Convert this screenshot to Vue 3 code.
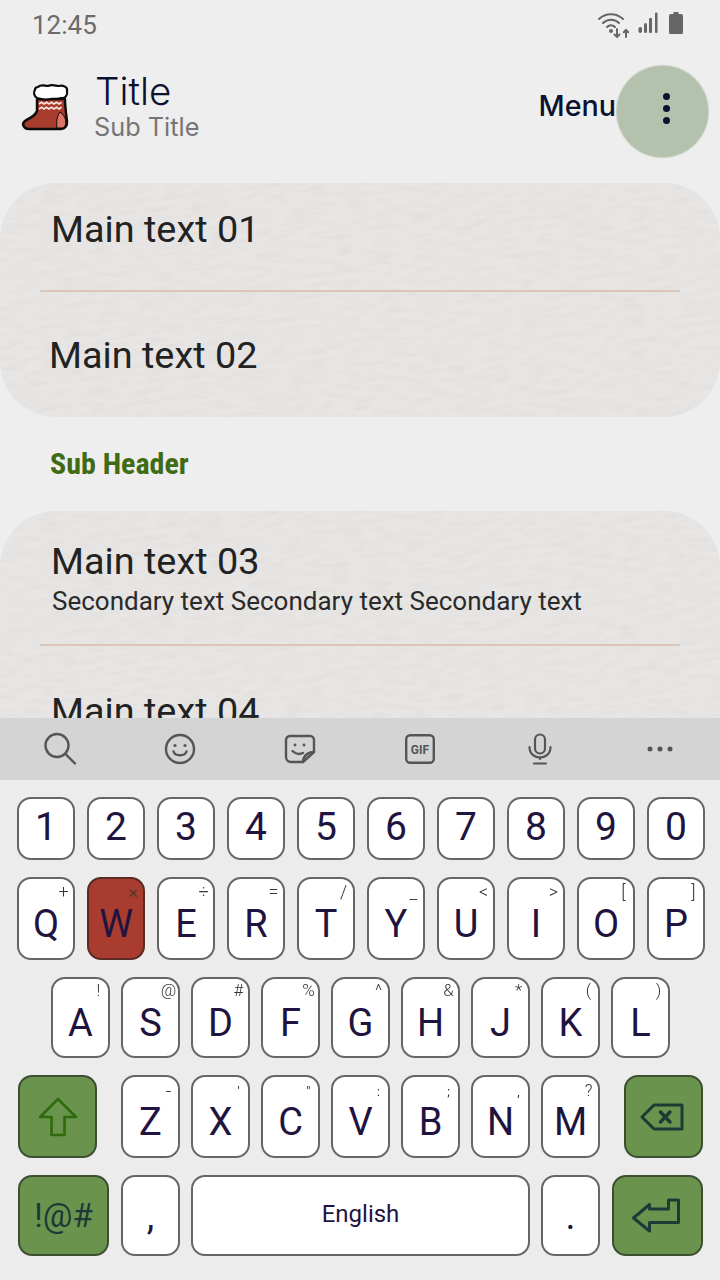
<template>
  <div class="screen">
    <!-- status bar -->
    <div class="status-bar">
      <span class="clock">12:45</span>
      <div class="status-icons">
        <svg class="wifi" width="31" height="26" viewBox="0 0 31 26" fill="none" stroke="#666" stroke-linecap="round">
          <path d="M1 7C7.500 0.500 18.500 0.500 25 7" stroke-width="2" />
          <path d="M5 11C9.500 6.500 16.500 6.500 21 11" stroke-width="2" />
          <path d="M9 15C11.500 12.500 14.500 12.500 17 15" stroke-width="2" />
          <circle cx="13" cy="19" r="2" fill="#666" stroke="none" />
          <path d="M19 17v8M16.500 22.500l2.500 2.500 2.500-2.500" stroke-width="2" />
          <path d="M28 25v-7M25.800 20.200l2.200-2.200 2.200 2.200" stroke-width="2" />
        </svg>
        <svg width="20" height="22" viewBox="0 0 20 22" fill="#666">
          <rect x="0.500" y="15" width="3.500" height="6" rx="1.700" />
          <rect x="6" y="11" width="3" height="10" rx="1.500" />
          <rect x="11" y="6" width="3" height="15" rx="1" />
          <rect x="17" y="0.500" width="2.500" height="20.500" rx="1" />
        </svg>
        <svg width="14" height="22" viewBox="0 0 14 22" fill="#666">
          <path d="M4.500 0h5v2H12a2 2 0 0 1 2 2V20.500a1.500 1.500 0 0 1-1.500 1.500h-11A1.500 1.500 0 0 1 0 20.500V4a2 2 0 0 1 2-2h2.500z" />
        </svg>
      </div>
    </div>

    <!-- app bar -->
    <header class="app-bar">
      <svg class="logo" width="70" height="65" viewBox="0 0 70 65">
        <path d="M27 24H55C55 31 56 38 57 46C57.500 51 55 54 51 54H19C14 54 11 49 15 46C19 43 25 42 27 36Z" fill="#a83c2e" stroke="#0b0b0b" stroke-width="2.400" stroke-linejoin="round" />
        <path d="M50 37C47 41 46 47 47 53H51C55 53 56 49.500 55.700 46C55.300 42 53 39 50 37Z" fill="#dc7566" stroke="#0b0b0b" stroke-width="1" />
        <path d="M29 29l2.500-1.700 2.500 1.700 2.500-1.700 2.500 1.700 2.500-1.700 2.500 1.700 2.500-1.700 2.500 1.700 2.500-1.700" fill="none" stroke="#f6e3df" stroke-width="1.700" />
        <path d="M29 34l2.500-1.700 2.500 1.700 2.500-1.700 2.500 1.700 2.500-1.700 2.500 1.700 2.500-1.700 2.500 1.700 2.500-1.700" fill="none" stroke="#f6e3df" stroke-width="1.700" />
        <path d="M28 12C31 9 35 11 38 11C42 9 46 11 49 11C53 10 58 12 57 16C58 20 55 24 51 23C47 25 43 23 40 24C36 25 30 24 27 23C24 21 23 17 25 15C25 13 26 12 28 12Z" fill="#fff" stroke="#0b0b0b" stroke-width="2.200" stroke-linejoin="round" />
      </svg>
      <div class="titles">
        <div class="title">Title</div>
        <div class="sub-title">Sub Title</div>
      </div>
      <div class="menu-label">Menu</div>
      <button class="more-btn">
        <span class="dot"></span><span class="dot"></span><span class="dot"></span>
      </button>
    </header>

    <!-- list -->
    <main class="list-area">
      <section class="card">
        <svg class="paper" width="100%" height="100%"><rect x="-60" y="-120" width="840" height="480" transform="rotate(-7 360 120)" filter="url(#paperGrain)" /></svg>
        <div class="row row-one"><span class="main-text">Main text 01</span></div>
        <div class="divider"></div>
        <div class="row row-two"><span class="main-text shift">Main text 02</span></div>
      </section>

      <h3 class="sub-header">Sub Header</h3>

      <section class="card card-long">
        <svg class="paper" width="100%" height="100%"><rect x="-60" y="-120" width="840" height="540" transform="rotate(-7 360 150)" filter="url(#paperGrain)" /></svg>
        <div class="row row-three">
          <span class="main-text">Main text 03</span>
          <span class="secondary">Secondary text Secondary text Secondary text</span>
        </div>
        <div class="divider"></div>
        <div class="row row-four"><span class="main-text">Main text 04</span></div>
      </section>

      <svg class="filter-defs" width="0" height="0">
        <filter id="paperGrain" x="0" y="0" width="100%" height="100%">
          <feTurbulence type="fractalNoise" baseFrequency="0.05 0.2" numOctaves="5" seed="7" />
          <feColorMatrix type="matrix" values="0 0 0 0 0.6  0 0 0 0 0.59  0 0 0 0 0.58  0.3 0.3 0 0 -0.24" />
        </filter>
      </svg>
    </main>

    <!-- keyboard toolbar -->
    <div class="kb-toolbar">
      <div class="tool">
        <svg width="36" height="36" viewBox="0 0 36 36" fill="none" stroke="#555" stroke-width="2.400" stroke-linecap="round">
          <circle cx="15" cy="14.500" r="11.500" />
          <path d="M23.500 23L33 32.500" />
        </svg>
      </div>
      <div class="tool">
        <svg width="32" height="32" viewBox="0 0 32 32" fill="none" stroke="#555" stroke-width="2.400" stroke-linecap="round">
          <circle cx="16" cy="16" r="14" />
          <circle cx="11" cy="12.500" r="1.600" fill="#555" stroke="none" />
          <circle cx="21" cy="12.500" r="1.600" fill="#555" stroke="none" />
          <path d="M9.500 18.500C11 23.500 21 23.500 22.500 18.500" />
        </svg>
      </div>
      <div class="tool">
        <svg width="32" height="30" viewBox="0 0 32 30" fill="none" stroke="#555" stroke-width="2.400" stroke-linejoin="round" stroke-linecap="round">
          <path d="M19 28H7a5 5 0 0 1-5-5V6a4 4 0 0 1 4-4h20a4 4 0 0 1 4 4v12z" />
          <path d="M19 28c0-6 5-10 11-10" />
          <circle cx="11" cy="11" r="1.400" fill="#555" stroke="none" />
          <circle cx="20" cy="11" r="1.400" fill="#555" stroke="none" />
          <path d="M8.500 17c3 3 7 3.500 10.500 2" />
        </svg>
      </div>
      <div class="tool">
        <svg width="30" height="30" viewBox="0 0 30 30">
          <rect x="1.200" y="1.200" width="27.600" height="27.600" rx="4" fill="none" stroke="#555" stroke-width="2.400" />
          <text x="15" y="19.500" text-anchor="middle" class="gif-text">GIF</text>
        </svg>
      </div>
      <div class="tool">
        <svg width="26" height="32" viewBox="0 0 26 32" fill="none" stroke="#555" stroke-width="2.200" stroke-linecap="round">
          <rect x="8" y="1.500" width="10" height="19" rx="5" />
          <path d="M2.500 14c0 14 21 14 21 0" />
          <path d="M13 24.500V26M7 30.500h12" />
        </svg>
      </div>
      <div class="tool">
        <svg width="26" height="6" viewBox="0 0 26 6" fill="#555">
          <circle cx="3" cy="3" r="2.500" />
          <circle cx="13" cy="3" r="2.500" />
          <circle cx="23" cy="3" r="2.500" />
        </svg>
      </div>
    </div>

    <!-- keyboard -->
    <div class="keyboard">
      <div class="kb-row num-row">
        <div v-for="n in numbers" :key="n" class="key num-key">{{ n }}</div>
      </div>
      <div class="kb-row top-row">
        <div v-for="k in topRow" :key="k.l" class="key top-key" :class="{ pressed: k.l === 'W' }">
          <span class="hint" :class="k.c">{{ k.h }}</span>{{ k.l }}
        </div>
      </div>
      <div class="kb-row mid-row">
        <div v-for="k in midRow" :key="k.l" class="key letter-key">
          <span class="hint" :class="k.c">{{ k.h }}</span>{{ k.l }}
        </div>
      </div>
      <div class="kb-row low-row">
        <div class="key fn-key shift-key">
          <svg width="40" height="40" viewBox="0 0 40 40" fill="none" stroke="#2f6a0c" stroke-width="2.600" stroke-linejoin="round">
            <path d="M20 2L38 20H26.500V38H13.500V20H2Z" />
          </svg>
        </div>
        <div class="letters">
          <div v-for="k in lowRow" :key="k.l" class="key letter-key">
            <span class="hint" :class="k.c">{{ k.h }}</span>{{ k.l }}
          </div>
        </div>
        <div class="key fn-key back-key">
          <svg width="44" height="28" viewBox="0 0 44 28" fill="none" stroke="#1e3a36" stroke-width="3" stroke-linejoin="round" stroke-linecap="round">
            <path d="M14 2H42V26H14L2 14Z" />
            <path d="M20.500 9L30 19M30 9L20.500 19" stroke-width="3.400" />
          </svg>
        </div>
      </div>
      <div class="kb-row bottom-row">
        <div class="key fn-key sym-key">!@#</div>
        <div class="key letter-key punct comma">,</div>
        <div class="key space-key">English</div>
        <div class="key letter-key punct">.</div>
        <div class="key fn-key enter-key">
          <svg width="48" height="36" viewBox="0 0 48 36" fill="none" stroke="#1e3a36" stroke-width="3" stroke-linejoin="round">
            <path d="M1.500 20L17.500 6.500V11H36.500V2H46.500V24.500H17.500V33Z" />
          </svg>
        </div>
      </div>
    </div>
  </div>
</template>

<script setup>
const numbers = ['1', '2', '3', '4', '5', '6', '7', '8', '9', '0']

const topRow = [
  { l: 'Q', h: '+' },
  { l: 'W', h: '×' },
  { l: 'E', h: '÷' },
  { l: 'R', h: '=' },
  { l: 'T', h: '/' },
  { l: 'Y', h: '_', c: 'low-dash' },
  { l: 'U', h: '<' },
  { l: 'I', h: '>' },
  { l: 'O', h: '[' },
  { l: 'P', h: ']' }
]

const midRow = [
  { l: 'A', h: '!' },
  { l: 'S', h: '@' },
  { l: 'D', h: '#' },
  { l: 'F', h: '%' },
  { l: 'G', h: '^' },
  { l: 'H', h: '&' },
  { l: 'J', h: '*' },
  { l: 'K', h: '(' },
  { l: 'L', h: ')' }
]

const lowRow = [
  { l: 'Z', h: '−', c: 'tiny' },
  { l: 'X', h: "'", c: 'tiny' },
  { l: 'C', h: '"', c: 'tiny' },
  { l: 'V', h: ':', c: 'tiny' },
  { l: 'B', h: ';', c: 'tiny' },
  { l: 'N', h: ',', c: 'tiny' },
  { l: 'M', h: '?', c: 'plain' }
]
</script>

<style>
html, body { margin: 0; background: #eeeeee; }
</style>

<style scoped>
.screen { width: 720px; height: 1280px; display: flex; flex-direction: column; overflow: hidden; background: #eeeeee; font-family: Roboto, "Noto Sans", sans-serif; }

.status-bar { height: 50px; flex-shrink: 0; display: flex; justify-content: space-between; align-items: center; padding: 0 37px 0 32px; box-sizing: border-box; }
.clock { font-size: 26px; color: #6b6b6b; }
.status-icons { display: flex; align-items: flex-start; gap: 11px; height: 26px; margin-top: -1px; }
.wifi { margin-right: -2px; }

.app-bar { height: 133px; flex-shrink: 0; display: flex; align-items: flex-start; padding-left: 10px; position: relative; box-sizing: border-box; }
.logo { margin-top: 25px; flex-shrink: 0; }
.titles { margin-left: 15px; margin-top: 20px; font-family: Inter, Roboto, sans-serif; }
.title { font-size: 38.500px; line-height: 42px; font-weight: 350; color: #0a1230; }
.sub-title { font-size: 25.300px; line-height: 30px; color: #757575; margin-left: -1px; }
.menu-label { margin-left: auto; margin-top: 37px; font-family: Inter, Roboto, sans-serif; font-size: 28.700px; line-height: 38px; font-weight: 500; color: #0a1230; }
.more-btn { width: 91px; height: 91px; margin: 16px 12px 0 1px; padding: 0 0 7px 8px; border: none; border-radius: 50%; background: #b4c1ad; display: flex; flex-direction: column; align-items: center; justify-content: center; gap: 5px; flex-shrink: 0; box-shadow: 0 0 1px 1px #c5cfc0; }
.dot { width: 7px; height: 7px; border-radius: 50%; background: #0a1230; }

.list-area { flex: 1; min-height: 0; overflow: hidden; }
.card { position: relative; height: 234px; border-radius: 56px; background: #e7e6e5; overflow: hidden; }
.card-long { height: 300px; }
.paper { position: absolute; inset: 0; pointer-events: none; }
.filter-defs { position: absolute; }
.row { position: relative; box-sizing: border-box; padding-left: 51px; display: flex; flex-direction: column; }
.row-one { height: 107px; padding-top: 24px; }
.row-two { height: 125px; padding-top: 41px; }
.row-three { height: 133px; padding-top: 28px; }
.row-four { padding-top: 43px; }
.main-text { font-size: 37.800px; line-height: 44px; color: #222; }
.shift { margin-left: -2px; }
.secondary { font-size: 26px; line-height: 34px; color: #2a2a2a; margin: 1px 0 0 1px; }
.divider { position: relative; height: 2px; margin: 0 40px; background: #dac7b9; }
.sub-header { height: 94px; box-sizing: border-box; margin: 0; padding: 30px 0 0 50px; font-size: 30px; line-height: 34px; font-weight: 700; font-stretch: 75%; color: #3f6b14; font-family: Roboto, sans-serif; }

.kb-toolbar { height: 62px; flex-shrink: 0; display: flex; background: #d4d4d4; }
.tool { flex: 1; display: flex; align-items: center; justify-content: center; }
.gif-text { font-family: Roboto, sans-serif; font-size: 12px; font-weight: 700; fill: #555; }

.keyboard { height: 500px; flex-shrink: 0; box-sizing: border-box; padding-top: 17px; background: #ececec; display: flex; flex-direction: column; gap: 17px; }
.kb-row { display: flex; }
.num-row { height: 63px; padding-left: 17px; gap: 12px; }
.top-row { height: 83px; padding-left: 17px; gap: 12px; }
.mid-row { height: 81px; padding-left: 51px; gap: 11px; }
.low-row { height: 83px; padding-left: 18px; }
.bottom-row { height: 81px; padding-left: 18px; }

.key { position: relative; box-sizing: border-box; display: flex; align-items: center; justify-content: center; background: #fff; border: 2px solid #666; border-radius: 14px; color: #1f1440; font-size: 38px; }
.num-key { width: 58px; font-size: 39px; padding-bottom: 4px; }
.top-key { width: 58px; padding-top: 10px; }
.letter-key { width: 59px; padding-top: 10px; }
.letters { display: flex; gap: 11px; margin: 0 24px; }
.pressed { background: #a83c2e; border-color: #5a2a24; }

.hint { position: absolute; top: 2px; right: 1.500px; width: 16px; text-align: center; font-size: 17px; line-height: 18px; font-weight: 300; color: #333; opacity: 0.99; }
.top-key .hint { top: 4px; font-size: 18px; }
.top-key .low-dash { top: 5px; }
.hint.tiny { font-size: 12px; top: 6px; font-weight: 400; color: #222; }
.hint.plain { top: 4px; }

.fn-key { background: #6a944e; border-color: #3c4f32; color: #1e3a36; }
.shift-key, .back-key { width: 79px; }
.back-key { padding-right: 3px; }
.sym-key { width: 91px; font-size: 33px; }
.enter-key { width: 91px; margin-left: 12px; padding-right: 4px; }
.letter-key.punct { padding-top: 0; }
.comma { margin-left: 12px; }
.space-key { width: 339px; margin: 0 11px; font-size: 24px; padding-bottom: 3px; }
</style>
